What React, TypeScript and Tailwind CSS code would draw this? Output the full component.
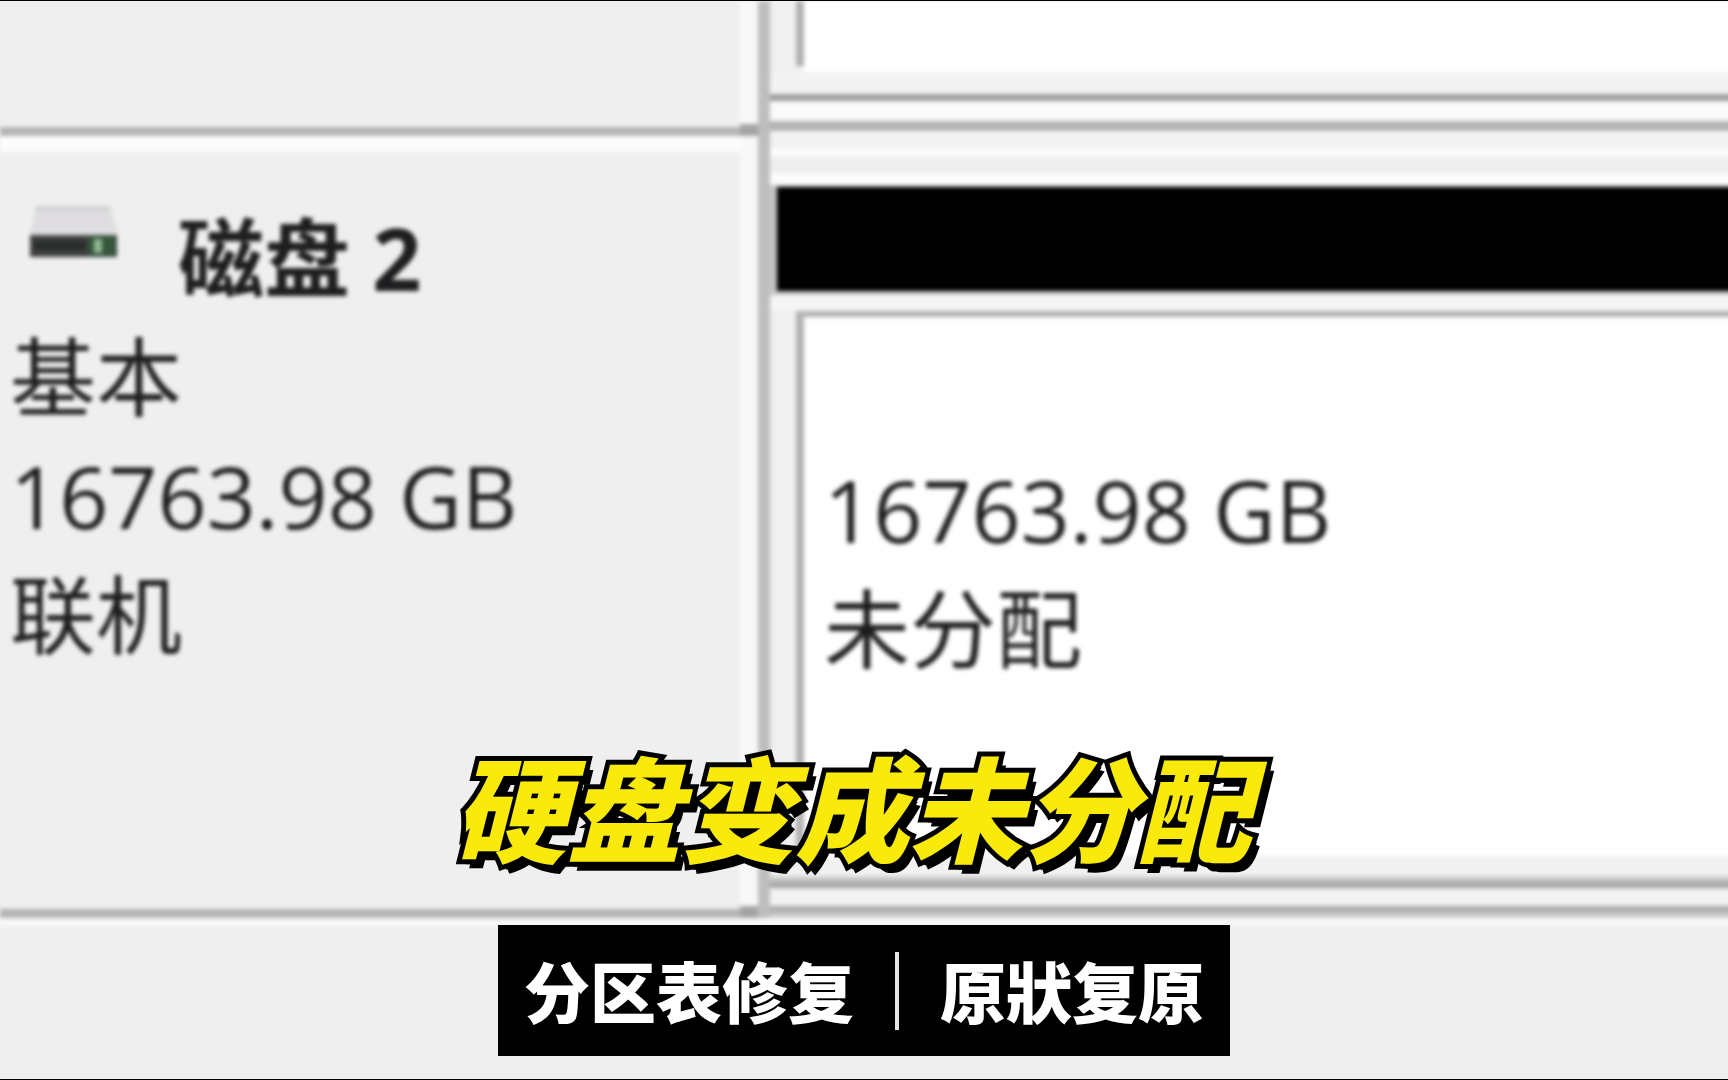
import type { ReactNode } from "react";

type Disk = {
  name: string;
  kind: string;
  size: string;
  status: string;
  partition: string;
};

const DISK: Disk = {
  name: "磁盘 2",
  kind: "基本",
  size: "16763.98 GB",
  status: "联机",
  partition: "未分配",
};

const CAPTION = "硬盘变成未分配";
const TAGS = ["分区表修复", "原狀复原"];

function DriveIcon() {
  return (
    <svg width="100" height="64" viewBox="0 0 100 64" aria-hidden="true">
      <path d="M10 8 H84 L92 36 H4 Z" fill="#dfdde0" />
      <path d="M10 8 H84 L85 13 H8 Z" fill="#d2d1d4" />
      <rect x="4" y="37" width="87" height="22" fill="#3f4140" />
      <rect x="8" y="43" width="52" height="9" fill="#2a2c2b" />
      <rect x="62" y="38" width="27" height="20" fill="#35563c" />
      <rect x="68" y="41" width="8" height="14" fill="#8fb992" />
    </svg>
  );
}

// left cell of a row: bevelled on the right and at the bottom
function DiskCell({ children }: { children?: ReactNode }) {
  return (
    <div className="flex w-[770px] shrink-0">
      <div className="min-w-0 flex-1 border-b-[9px] border-[#b4b4b4] bg-[#efefef]">{children}</div>
      <div className="w-[18px] shrink-0 border-b-[12px] border-[#a4a4a4] bg-[#f8f8f8]" />
      <div className="w-3 shrink-0 bg-[#bebebe]" />
    </div>
  );
}

function PreviousRow() {
  return (
    <section className="flex h-[135px]">
      <DiskCell />
      <div className="flex min-w-0 flex-1 flex-col">
        <div className="flex h-[71px] bg-[#f0f0f0] pl-[26px]">
          <div className="h-[65px] w-2 bg-[#b0b0b0]" />
          <div className="flex-1 bg-white" />
        </div>
        <div className="h-[22px] bg-[#f3f3f3]" />
        <div className="h-[7px] bg-[#a0a0a0]" />
        <div className="h-5 bg-[#fafafa]" />
        <div className="h-[10px] bg-[#b4b4b4]" />
        <div className="flex-1 bg-[#f4f4f4]" />
      </div>
    </section>
  );
}

function DiskRow({ disk }: { disk: Disk }) {
  return (
    <section className="flex">
      <DiskCell>
        <div className="h-4 bg-[#fcfcfc]" />
        <div className="px-[10px] pt-[46px] pb-[235px] text-[86px] leading-[119px]">
          <div className="flex items-start">
            <div className="w-[168px] shrink-0 pl-4">
              <DriveIcon />
            </div>
            <h1 className="font-bold whitespace-nowrap">{disk.name}</h1>
          </div>
          <p>{disk.kind}</p>
          <p>{disk.size}</p>
          <p>{disk.status}</p>
        </div>
      </DiskCell>
      <div className="flex min-w-0 flex-1 flex-col">
        <div className="h-3 bg-[#f2f2f2]" />
        <div className="h-[9px] bg-[#fbfbfb]" />
        <div className="h-4 bg-[#eeeeee]" />
        <div className="h-3 bg-[#fcfcfc]" />
        <div className="border-t-2 border-b-4 border-l-[7px] border-[#c4c4c4]">
          <div className="h-[104px] bg-black" />
        </div>
        <div className="h-4 bg-[#f5f5f5]" />
        <div className="flex flex-1 bg-[#f0f0f0] pl-[26px]">
          <div className="flex-1 border-t-[6px] border-l-8 border-[#b2b2b2] bg-white px-5 pt-[133px] text-[86px] leading-[119px]">
            <p className="whitespace-nowrap">{disk.size}</p>
            <p>{disk.partition}</p>
          </div>
        </div>
        <div className="h-5 bg-[#f1f1f1]" />
        <div className="h-3 bg-linear-to-b from-[#dadada] to-[#969696]" />
        <div className="h-[18px] bg-[#f3f3f3]" />
        <div className="h-3 bg-linear-to-b from-[#a0a0a0] to-[#d8d8d8]" />
      </div>
    </section>
  );
}

export default function App() {
  return (
    <main className="relative min-h-screen overflow-hidden border-y border-black bg-[#efefef] font-['Open_Sans','Noto_Sans_CJK_SC',sans-serif] text-[#1e1e20]">
      <div className="-mr-3 blur-[2px]">
        <PreviousRow />
        <DiskRow disk={DISK} />
        <div className="h-2 bg-[#f8f8f8]" />
      </div>

      <div className="absolute inset-x-0 bottom-[23px] flex flex-col items-center font-['Noto_Sans_CJK_SC',sans-serif] font-black whitespace-nowrap">
        <h2 className="mb-10 pr-6 text-[114px] leading-[160px] text-[#faea0c] italic [paint-order:stroke_fill] [-webkit-text-stroke:10px_#000] [text-shadow:4px_5px_0_#000,7px_9px_0_#000]">
          {CAPTION}
        </h2>
        <div className="flex h-[131px] items-center gap-[41px] bg-black px-[26px] text-[66px] leading-[80px] text-white">
          <span className="pb-1">{TAGS[0]}</span>
          <span className="h-[78px] w-1 bg-[#e6e6e6]" />
          <span className="pb-1">{TAGS[1]}</span>
        </div>
      </div>
    </main>
  );
}
